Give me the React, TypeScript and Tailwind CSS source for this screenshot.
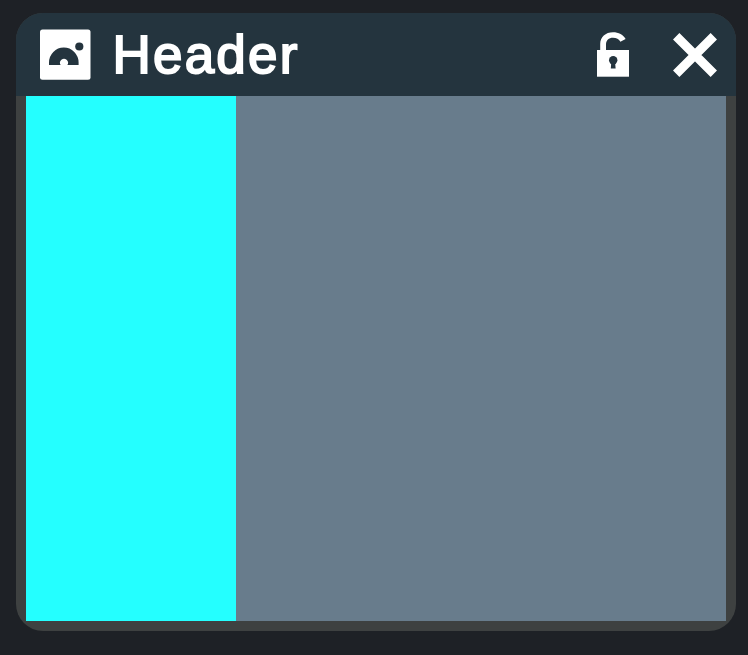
function ImageIcon() {
  return (
    <svg className="h-[51px] w-[51px] shrink-0" viewBox="0 0 51 51">
      <rect width="50.5" height="50.3" x="0" y="0.500" rx="2.5" fill="#fff" />
      <path d="M9 36V33.500A14.800 15 0 0 1 38.600 33.500V36H27.400A4 4 0 1 0 20.600 36Z" fill="#24343e" />
      <circle cx="39.300" cy="17.500" r="4.100" fill="#24343e" />
    </svg>
  );
}

function UnlockIcon() {
  return (
    <svg className="h-[46px] w-[33px]" viewBox="0 0 33 46">
      <path d="M3.200 19V12C3.200 5 8.500 0.200 16 0.200C21.500 0.200 26.500 2.600 28.600 7L23.400 9.800C22 7.200 19.400 5.700 16 5.700C11.800 5.700 9 8.200 9 12.500V19Z" fill="#fff" />
      <rect y="18" width="32" height="26.700" fill="#fff" />
      <circle cx="16.200" cy="28.300" r="4.200" fill="#24343e" />
      <path d="M14.300 30H18.100L18.600 36.500H13.800Z" fill="#24343e" />
    </svg>
  );
}

function CloseIcon() {
  return (
    <svg className="h-[46px] w-[46px]" viewBox="0 0 46 46">
      <path d="M4.200 4.200L41.800 41.800M41.800 4.200L4.200 41.800" stroke="#fff" strokeWidth="9" />
    </svg>
  );
}

export default function App() {
  return (
    <div className="h-[655px] w-[748px] overflow-hidden bg-[#1e2126] pt-[13px] pl-4">
      <section className="flex h-[618px] w-[720px] flex-col overflow-hidden rounded-[27px] bg-[#3e4141]">
        <header className="flex h-[83px] shrink-0 items-center bg-[#24343e] pr-[18px] pl-6">
          <ImageIcon />
          <h1 className="ml-[21.5px] font-['Liberation_Sans',Arial,sans-serif] text-[53px] leading-[60px] tracking-[2.2px] text-white [-webkit-text-stroke:1.900px_white]">
            Header
          </h1>
          <div className="ml-auto flex items-center gap-[42px]">
            <button aria-label="Unlock"><UnlockIcon /></button>
            <button aria-label="Close"><CloseIcon /></button>
          </div>
        </header>
        <main className="mx-[10px] mb-[10px] flex flex-1">
          <div className="w-[210px] bg-[#24ffff]" />
          <div className="flex-1 bg-[#687c8c]" />
        </main>
      </section>
    </div>
  );
}
